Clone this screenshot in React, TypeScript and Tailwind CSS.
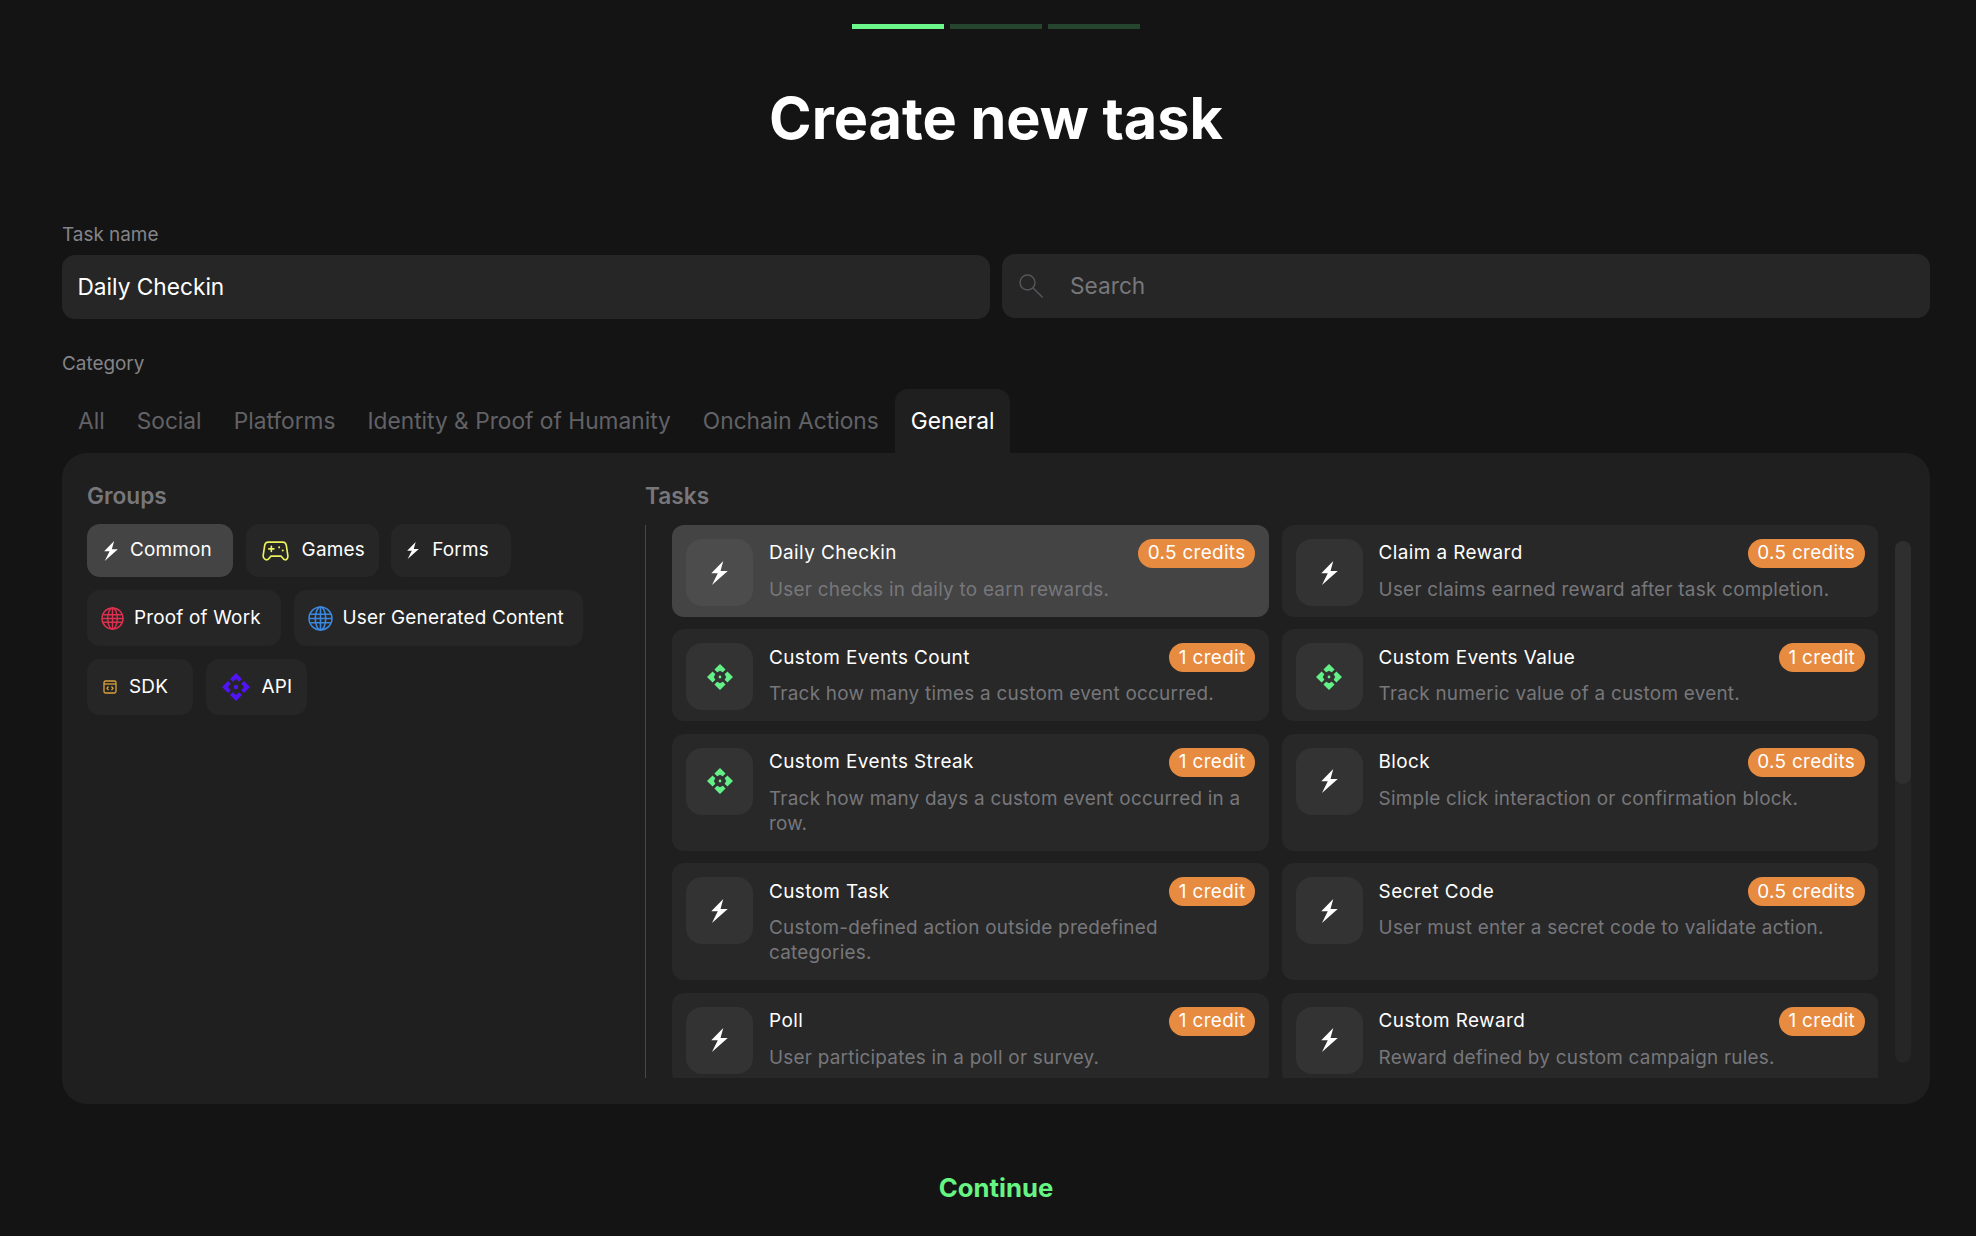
import React from "react";

function Bolt({ className }: { className: string }) {
  return (
    <svg viewBox="0 0 48 70" className={className} fill="currentColor">
      <path d="M35 0 L0 36 L19 36 L2 70 L48 29 L27 29 Z" />
    </svg>
  );
}

function Diamonds({ className, thin }: { className: string; thin?: boolean }) {
  const arm = thin
    ? "M14 0 L20 6 L17.200 8.800 L14 6 L10.800 8.800 L8 6 Z"
    : "M14 0 L20 6 L17 9 L14 7.300 L11 9 L8 6 Z";
  return (
    <svg viewBox="0 0 28 28" className={className} fill="currentColor">
      <path d={arm} />
      <path d={arm} transform="rotate(90 14 14)" />
      <path d={arm} transform="rotate(180 14 14)" />
      <path d={arm} transform="rotate(270 14 14)" />
      <circle cx="14" cy="14" r={thin ? 2.2 : 1.5} />
    </svg>
  );
}

function Globe({ className }: { className: string }) {
  return (
    <svg viewBox="0 0 24 24" className={className} fill="none" stroke="currentColor" strokeWidth="1.500">
      <circle cx="12" cy="12" r="11" />
      <ellipse cx="12" cy="12" rx="5" ry="11" />
      <path d="M12 1v22M2.200 8h19.600M2.200 16h19.600M1 12h22" />
    </svg>
  );
}

function Pad({ className }: { className: string }) {
  return (
    <svg viewBox="0 0 26 19" className={className} fill="none" stroke="currentColor" strokeWidth="1.600" strokeLinejoin="round" strokeLinecap="round">
      <path d="M6 1h14c2 0 3 1 3.400 3l1.500 10c.3 2-.9 4-2.400 4-1.300 0-2-.7-3-2.200l-1-1.300H8.500l-1 1.300C6.500 17.300 5.800 18 4.500 18 3 18 .8 16 1.100 14L2.600 4C3 2 4 1 6 1Z" />
      <path d="M6.500 7.500h5M9 5v5" />
      <path d="M16.500 6h.01M20 9h.01" strokeWidth="2" />
    </svg>
  );
}

function Sdk({ className }: { className: string }) {
  return (
    <svg viewBox="0 0 14 14" className={className} fill="none" stroke="currentColor" strokeWidth="1.300">
      <path d="M2.500 1h9a1.500 1.500 0 0 1 1.500 1.500v9a1.500 1.500 0 0 1-1.500 1.500h-9A1.500 1.500 0 0 1 1 11.500v-9A1.500 1.500 0 0 1 2.500 1Z" />
      <path d="M1 4h12" />
      <path d="M5.500 6.500 4 8.300l1.500 1.800M8.500 6.500 10 8.300l-1.500 1.800" />
    </svg>
  );
}

function SearchIcon({ className }: { className: string }) {
  return (
    <svg viewBox="0 0 24 24" className={className} fill="none" stroke="currentColor" strokeWidth="1.500" strokeLinecap="round">
      <circle cx="8.500" cy="8.500" r="7.500" />
      <path d="M14 14 23.200 23" />
    </svg>
  );
}

type Group = {
  label: string;
  icon: React.ReactNode;
  box: string;
  active?: boolean;
};

const groupRows: Group[][] = [
  [
    { label: "Common", active: true, box: "h-[53px] w-[146px] pl-[17px] gap-[12px]", icon: <Bolt className="w-[14px] h-[20px] text-white" /> },
    { label: "Games", box: "h-[53px] w-[133px] pl-[16px] gap-[13px]", icon: <Pad className="w-[27px] h-[20px] text-[#ebf05c]" /> },
    { label: "Forms", box: "h-[53px] w-[120px] pl-[16px] gap-[13px]", icon: <Bolt className="w-[12px] h-[17px] text-white" /> },
  ],
  [
    { label: "Proof of Work", box: "h-[56px] w-[194px] pl-[14px] gap-[10px]", icon: <Globe className="w-[23px] h-[23px] text-[#e0304f]" /> },
    { label: "User Generated Content", box: "h-[56px] w-[289px] pl-[14px] gap-[10px]", icon: <Globe className="w-[25px] h-[25px] text-[#3c88de]" /> },
  ],
  [
    { label: "SDK", box: "h-[56px] w-[106px] pl-[16px] gap-[12px]", icon: <Sdk className="w-[14px] h-[14px] text-[#d9a13c]" /> },
    { label: "API", box: "h-[56px] w-[101px] pl-[16px] gap-[12px]", icon: <Diamonds thin className="w-[28px] h-[28px] text-[#5014f5]" /> },
  ],
];

type Task = {
  title: string;
  desc: string;
  credit: string;
  green?: boolean;
  active?: boolean;
};

const tasks: Task[] = [
  { title: "Daily Checkin", desc: "User checks in daily to earn rewards.", credit: "0.5 credits", active: true },
  { title: "Claim a Reward", desc: "User claims earned reward after task completion.", credit: "0.5 credits" },
  { title: "Custom Events Count", desc: "Track how many times a custom event occurred.", credit: "1 credit", green: true },
  { title: "Custom Events Value", desc: "Track numeric value of a custom event.", credit: "1 credit", green: true },
  { title: "Custom Events Streak", desc: "Track how many days a custom event occurred in a row.", credit: "1 credit", green: true },
  { title: "Block", desc: "Simple click interaction or confirmation block.", credit: "0.5 credits" },
  { title: "Custom Task", desc: "Custom-defined action outside predefined categories.", credit: "1 credit" },
  { title: "Secret Code", desc: "User must enter a secret code to validate action.", credit: "0.5 credits" },
  { title: "Poll", desc: "User participates in a poll or survey.", credit: "1 credit" },
  { title: "Custom Reward", desc: "Reward defined by custom campaign rules.", credit: "1 credit" },
];

const tabs = ["All", "Social", "Platforms", "Identity & Proof of Humanity", "Onchain Actions"];

export default function App() {
  return (
    <div className="h-[1236px] overflow-hidden bg-[#141414] pl-[62px] pr-[46px] pt-[24px] text-white [font-family:Inter,sans-serif]">
      <div className="flex justify-center gap-[6px]">
        <div className="h-[5px] w-[92px] bg-[#6bf78a]" />
        <div className="h-[5px] w-[92px] bg-[#25452f]" />
        <div className="h-[5px] w-[92px] bg-[#25452f]" />
      </div>
      <h1 className="mt-[57px] text-center text-[57.600px] leading-[64px] font-bold">Create new task</h1>

      <div className="mt-[72px] grid grid-cols-2 gap-[12px]">
        <div>
          <div className="text-[18.900px] leading-[25px] text-[#848488]">Task name</div>
          <div className="mt-[8px] flex h-[64px] items-center rounded-[13px] bg-[#262626] px-[15.500px] text-[22.680px]">Daily Checkin</div>
        </div>
        <div className="flex items-end">
          <div className="mb-[1px] flex h-[64px] w-full items-center rounded-[13px] bg-[#262626] pl-[17px] text-[22.680px] text-[#77777b]">
            <SearchIcon className="h-[24px] w-[24px] text-[#55555a]" />
            <span className="ml-[27px]">Search</span>
          </div>
        </div>
      </div>

      <div className="mt-[32px] text-[18.900px] leading-[25px] text-[#848488]">Category</div>
      <div className="mt-[13px] flex h-[64px]">
        {tabs.map((t) => (
          <div key={t} className="flex items-center px-[16px] text-[22.720px] text-[#626266]">{t}</div>
        ))}
        <div className="flex items-center rounded-t-[13px] bg-[#1f1f1f] px-[16px] text-[22.720px] text-white">General</div>
      </div>

      <div className="flex h-[651px] rounded-[25px] bg-[#1f1f1f] pl-[25px] pr-[19px] pt-[29px]">
        <div className="w-[558px] shrink-0">
          <div className="text-[22.680px] leading-[28px] font-semibold text-[#77777b]">Groups</div>
          <div className="mt-[14px] flex flex-col gap-[13px]">
            {groupRows.map((row, i) => (
              <div key={i} className="flex gap-[12.600px]">
                {row.map((g) => (
                  <div
                    key={g.label}
                    className={`flex items-center rounded-[13px] text-[18.900px] tracking-[0.2px] ${g.box} ${g.active ? "bg-[#444444]" : "bg-[#262626]"}`}
                  >
                    {g.icon}
                    <span className="whitespace-nowrap">{g.label}</span>
                  </div>
                ))}
              </div>
            ))}
          </div>
        </div>

        <div className="flex min-w-0 flex-1 flex-col">
          <div className="text-[22.680px] leading-[28px] font-semibold text-[#77777b]">Tasks</div>
          <div className="mt-[15px] flex h-[553px]">
            <div className="h-full w-px bg-[#48484a]" />
            <div className="ml-[26px] h-full w-[1207px] overflow-hidden">
              <div className="grid grid-cols-[597px_597px] gap-x-[12.600px] gap-y-[12.600px]">
                {tasks.map((t) => (
                  <div
                    key={t.title}
                    className={`flex gap-[16px] rounded-[12px] px-[14px] pb-[14.800px] pt-[14px] ${t.active ? "bg-[#444444]" : "bg-[#282828]"}`}
                  >
                    <div className={`-mb-[5px] flex h-[67px] w-[67px] shrink-0 items-center justify-center rounded-[16px] ${t.active ? "bg-[#4c4c4c]" : "bg-[#333333]"}`}>
                      {t.green ? (
                        <Diamonds className="h-[26px] w-[26px] text-[#63f087]" />
                      ) : (
                        <Bolt className="h-[24px] w-[17px] text-white" />
                      )}
                    </div>
                    <div className="min-w-0 flex-1">
                      <div className="flex h-[28.800px] items-center justify-between">
                        <span className="text-[18.900px] font-normal tracking-[0.42px]">{t.title}</span>
                        <span className="flex h-full items-center rounded-full bg-[#e68b40] px-[9.500px] text-[18.900px] tracking-[0.34px]">{t.credit}</span>
                      </div>
                      <div className="mt-[9px] text-[18.900px] leading-[25.200px] tracking-[0.25px] text-[#77777b]">{t.desc}</div>
                    </div>
                  </div>
                ))}
              </div>
            </div>
            <div className="ml-[17px] mt-[16px] h-[522px] w-[16px] rounded-full bg-[#262626]">
              <div className="h-[243px] w-full rounded-full bg-[#2f2f2f]" />
            </div>
          </div>
        </div>
      </div>

      <div className="mt-[66px] text-center text-[25.700px] leading-[36px] font-bold text-[#66f582]">Continue</div>
    </div>
  );
}
